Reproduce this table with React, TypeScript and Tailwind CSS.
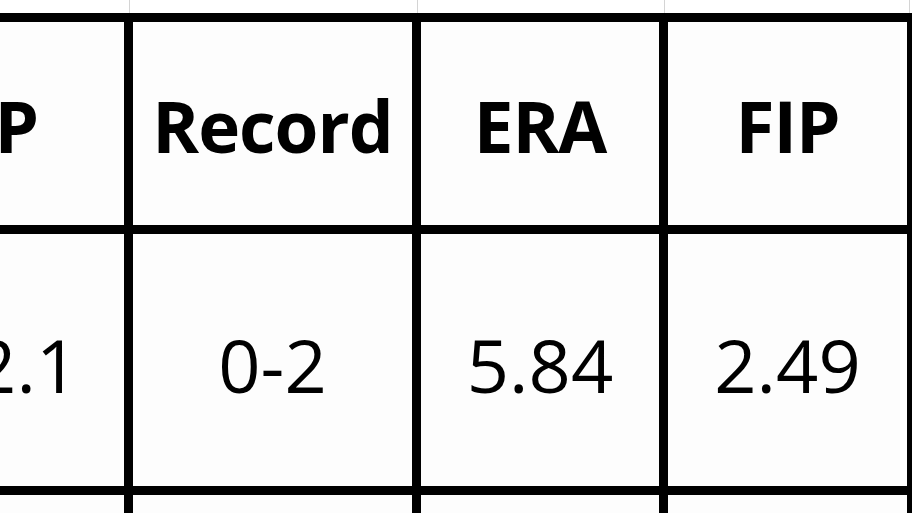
import React from 'react'

// visible slice of a spreadsheet: a bordered stats table, zoomed in
const headers = ['IP', 'Record', 'ERA', 'FIP', '']
const values = ['12.1', '0-2', '5.84', '2.49', '']

export default function App() {
  return (
    <div className="w-[912px] h-[513px] overflow-hidden bg-white text-black" style={{ fontFamily: '"Open Sans", Lato, "Liberation Sans", sans-serif' }}>
      {/* faint gridlines above the table */}
      <div className="flex h-[13px] ml-[-114px]">
        <div className="w-[244px] shrink-0 border-r border-[#d4d4d4]" />
        <div className="w-[288px] shrink-0 border-r border-[#d4d4d4]" />
        <div className="w-[247px] shrink-0 border-r border-[#d4d4d4]" />
        <div className="w-[245px] shrink-0 border-r border-[#d4d4d4]" />
      </div>

      {/* table, borders drawn by the black gaps */}
      <div className="bg-black pt-[9px]">
        <div className="grid grid-cols-[238px_279px_238px_239px_200px] grid-rows-[203px_252px_60px] gap-[9px] ml-[-114px] w-[1050px]">
          {headers.map((h, i) => (
            <div key={'h' + i} className="bg-[#fdfdfd] flex items-center justify-center pt-[4px] text-[71px] leading-none font-bold tracking-[-1px]">
              {h}
            </div>
          ))}
          {values.map((v, i) => (
            <div key={'v' + i} className="bg-[#fdfdfd] flex items-center justify-center pt-[10px] text-[74px] leading-none">
              {v}
            </div>
          ))}
          {headers.map((_, i) => (
            <div key={'e' + i} className="bg-[#fdfdfd]" />
          ))}
        </div>
      </div>
    </div>
  )
}
